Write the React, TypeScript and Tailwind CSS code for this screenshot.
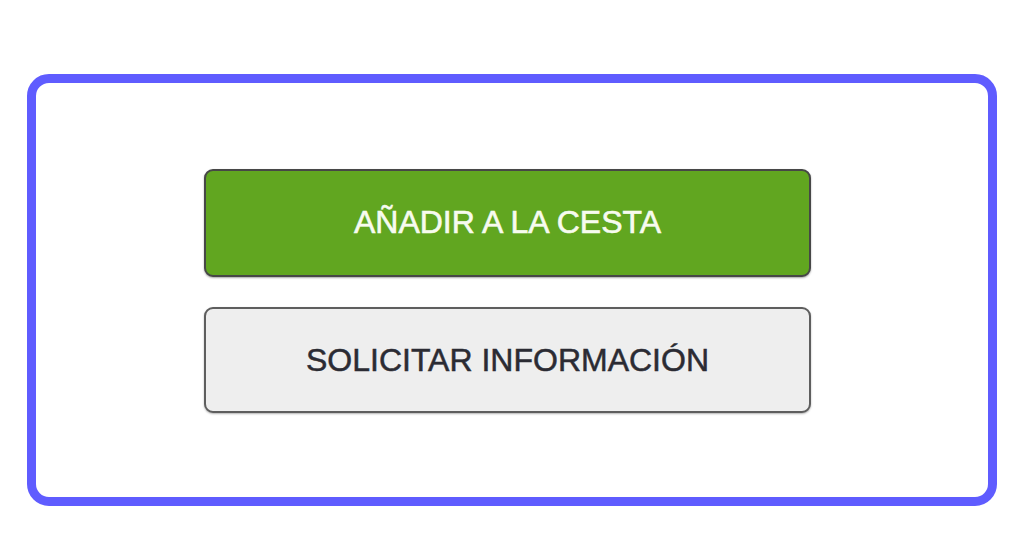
export default function App() {
    return (
        <div className="w-full h-[536px] bg-white pt-[74px] pl-[27px] font-['Liberation_Sans',Arial,sans-serif]">
            <div className="w-[970px] h-[432px] rounded-[22px] border-[9px] border-[#5f5cff] pl-[168px] pt-[86px] flex flex-col gap-[30px]">
                {/* Add to cart */}
                <button className="w-[607px] h-[108px] rounded-[9px] border-2 border-[#474747] bg-[#61a620] text-[32px] leading-none text-[#f7fbef] [-webkit-text-stroke:0.6px_#f7fbef] pb-[3px] shadow-[0_1px_2px_rgba(0,0,0,0.35)]">
                    AÑADIR A LA CESTA
                </button>

                {/* Request info */}
                <button className="w-[607px] h-[106px] rounded-[9px] border-2 border-[#5e5e5e] bg-[#eeeeee] text-[32px] leading-none text-[#2b2b33] [-webkit-text-stroke:0.5px_#2b2b33] shadow-[0_1px_2px_rgba(0,0,0,0.3)]">
                    SOLICITAR INFORMACIÓN
                </button>
            </div>
        </div>
    );
}
